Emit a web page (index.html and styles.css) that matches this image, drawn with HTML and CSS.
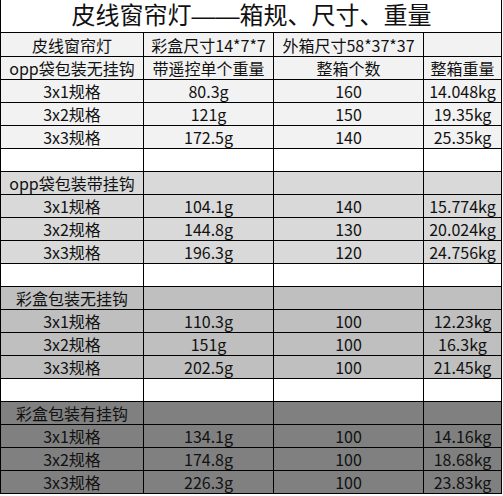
FILE: index.html
```html
<!DOCTYPE html>
<html lang="zh-CN">
<head>
<meta charset="utf-8">
<title>皮线窗帘灯——箱规、尺寸、重量</title>
<link rel="stylesheet" href="styles.css">
</head>
<body>
<div class="sheet">
  <div class="title">皮线窗帘灯——箱规、尺寸、重量</div>

  <div class="row s1"><div class="cell">皮线窗帘灯</div><div class="cell">彩盒尺寸14*7*7</div><div class="cell">外箱尺寸58*37*37</div><div class="cell"></div></div>
  <div class="row s1"><div class="cell">opp袋包装无挂钩</div><div class="cell">带遥控单个重量</div><div class="cell">整箱个数</div><div class="cell">整箱重量</div></div>
  <div class="row s1"><div class="cell">3x1规格</div><div class="cell">80.3g</div><div class="cell">160</div><div class="cell">14.048kg</div></div>
  <div class="row s1"><div class="cell">3x2规格</div><div class="cell">121g</div><div class="cell">150</div><div class="cell">19.35kg</div></div>
  <div class="row s1"><div class="cell">3x3规格</div><div class="cell">172.5g</div><div class="cell">140</div><div class="cell">25.35kg</div></div>
  <div class="row blank"><div class="cell"></div><div class="cell"></div><div class="cell"></div><div class="cell"></div></div>

  <div class="row s2"><div class="cell">opp袋包装带挂钩</div><div class="cell"></div><div class="cell"></div><div class="cell"></div></div>
  <div class="row s2"><div class="cell">3x1规格</div><div class="cell">104.1g</div><div class="cell">140</div><div class="cell">15.774kg</div></div>
  <div class="row s2"><div class="cell">3x2规格</div><div class="cell">144.8g</div><div class="cell">130</div><div class="cell">20.024kg</div></div>
  <div class="row s2"><div class="cell">3x3规格</div><div class="cell">196.3g</div><div class="cell">120</div><div class="cell">24.756kg</div></div>
  <div class="row blank"><div class="cell"></div><div class="cell"></div><div class="cell"></div><div class="cell"></div></div>

  <div class="row s3"><div class="cell">彩盒包装无挂钩</div><div class="cell"></div><div class="cell"></div><div class="cell"></div></div>
  <div class="row s3"><div class="cell">3x1规格</div><div class="cell">110.3g</div><div class="cell">100</div><div class="cell">12.23kg</div></div>
  <div class="row s3"><div class="cell">3x2规格</div><div class="cell">151g</div><div class="cell">100</div><div class="cell">16.3kg</div></div>
  <div class="row s3"><div class="cell">3x3规格</div><div class="cell">202.5g</div><div class="cell">100</div><div class="cell">21.45kg</div></div>
  <div class="row blank"><div class="cell"></div><div class="cell"></div><div class="cell"></div><div class="cell"></div></div>

  <div class="row s4"><div class="cell">彩盒包装有挂钩</div><div class="cell"></div><div class="cell"></div><div class="cell"></div></div>
  <div class="row s4"><div class="cell">3x1规格</div><div class="cell">134.1g</div><div class="cell">100</div><div class="cell">14.16kg</div></div>
  <div class="row s4"><div class="cell">3x2规格</div><div class="cell">174.8g</div><div class="cell">100</div><div class="cell">18.68kg</div></div>
  <div class="row s4"><div class="cell">3x3规格</div><div class="cell">226.3g</div><div class="cell">100</div><div class="cell">23.83kg</div></div>
</div>
</body>
</html>
```
FILE: styles.css
```css
html, body {
  margin: 0;
  padding: 0;
  background: #fff;
}

body {
  font-family: "Noto Sans CJK SC", "Noto Sans", sans-serif;
  color: #111;
}

.sheet {
  width: 502px;
  box-sizing: border-box;
  display: grid;
  grid-template-columns: 142px 129px 149px 77px;
  grid-template-rows: 32px 23px;
  grid-auto-rows: 22px;
  gap: 1px;
  padding: 0 1px 1px 1px;
  background: #000;
}

.title {
  grid-column: 1 / -1;
  background: #fff;
  display: flex;
  align-items: center;
  justify-content: center;
  font-family: "Liberation Sans", "Noto Sans CJK SC", sans-serif;
  font-size: 24px;
  line-height: 28px;
  padding-left: 1px;
}

.row {
  display: contents;
}

.cell {
  display: flex;
  align-items: center;
  justify-content: center;
  font-size: 16px;
  line-height: 22px;
  white-space: nowrap;
  overflow: visible;
}

.s1 .cell { background: #f2f2f2; }
.s2 .cell { background: #d9d9d9; }
.s3 .cell { background: #bfbfbf; }
.s4 .cell { background: #808080; }
.blank .cell { background: #fff; }
```
